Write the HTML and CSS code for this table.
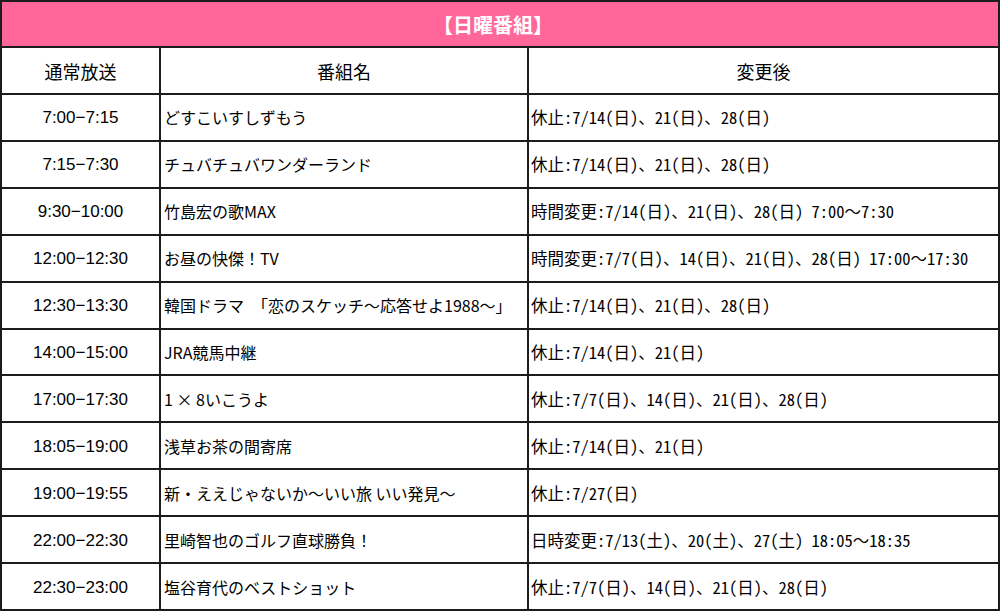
FILE: index.html
```html
<!DOCTYPE html>
<html lang="ja">
<head>
<meta charset="utf-8">
<link rel="stylesheet" href="styles.css">
</head>
<body>
<div class="sched">
  <div class="title">【日曜番組】</div>
  <div class="cell head">通常放送</div>
  <div class="cell head">番組名</div>
  <div class="cell head">変更後</div>

  <div class="cell time">7:00−7:15</div>
  <div class="cell name">どすこいすしずもう</div>
  <div class="cell change">休止:7/14(日)、21(日)、28(日)</div>

  <div class="cell time">7:15−7:30</div>
  <div class="cell name">チュバチュバワンダーランド</div>
  <div class="cell change">休止:7/14(日)、21(日)、28(日)</div>

  <div class="cell time">9:30−10:00</div>
  <div class="cell name">竹島宏の歌MAX</div>
  <div class="cell change">時間変更:7/14(日)、21(日)、28(日) 7:00<span class="fw">～</span>7:30</div>

  <div class="cell time">12:00−12:30</div>
  <div class="cell name">お昼の快傑！TV</div>
  <div class="cell change">時間変更:7/7(日)、14(日)、21(日)、28(日) 17:00<span class="fw">～</span>17:30</div>

  <div class="cell time">12:30−13:30</div>
  <div class="cell name">韓国ドラマ　「恋のスケッチ～応答せよ1988～」</div>
  <div class="cell change">休止:7/14(日)、21(日)、28(日)</div>

  <div class="cell time">14:00−15:00</div>
  <div class="cell name">JRA競馬中継</div>
  <div class="cell change">休止:7/14(日)、21(日)</div>

  <div class="cell time">17:00−17:30</div>
  <div class="cell name">1 × 8いこうよ</div>
  <div class="cell change">休止:7/7(日)、14(日)、21(日)、28(日)</div>

  <div class="cell time">18:05−19:00</div>
  <div class="cell name">浅草お茶の間寄席</div>
  <div class="cell change">休止:7/14(日)、21(日)</div>

  <div class="cell time">19:00−19:55</div>
  <div class="cell name">新・ええじゃないか～いい旅 いい発見～</div>
  <div class="cell change">休止:7/27(日)</div>

  <div class="cell time">22:00−22:30</div>
  <div class="cell name">里崎智也のゴルフ直球勝負！</div>
  <div class="cell change">日時変更:7/13(土)、20(土)、27(土) 18:05<span class="fw">～</span>18:35</div>

  <div class="cell time">22:30−23:00</div>
  <div class="cell name">塩谷育代のベストショット</div>
  <div class="cell change">休止:7/7(日)、14(日)、21(日)、28(日)</div>
</div>
</body>
</html>
```

FILE: styles.css
```css
html, body {
  margin: 0;
  padding: 0;
  background: #ffffff;
}

.sched {
  box-sizing: border-box;
  width: 1000px;
  height: 611px;
  padding: 2px;
  background: #1c1c1c;
  display: grid;
  grid-template-columns: 157px 366px 1fr;
  grid-template-rows: 44px 45px repeat(11, 1fr);
  gap: 2px;
  font-family: "Noto Sans CJK JP", "Noto Sans", sans-serif;
  color: #000000;
  font-size: 16px;
}

.title {
  grid-column: 1 / 4;
  background: #ff6699;
  color: #ffffff;
  font-weight: bold;
  font-size: 20px;
  display: flex;
  align-items: center;
  justify-content: center;
  padding-right: 14px;
}

.cell {
  background: #ffffff;
  display: flex;
  align-items: center;
  white-space: pre;
  overflow: hidden;
}

.head {
  justify-content: center;
  font-size: 18px;
}

.time {
  justify-content: center;
  font-family: "Liberation Sans", "Noto Sans CJK JP", sans-serif;
  font-size: 17px;
  padding-top: 2px;
}

.name {
  padding-left: 3px;
  font-size: 16px;
}

.change {
  padding-left: 2px;
  font-size: 16.5px;
  font-feature-settings: "hwid" 1;
}

.fw {
  font-feature-settings: normal;
}
```
